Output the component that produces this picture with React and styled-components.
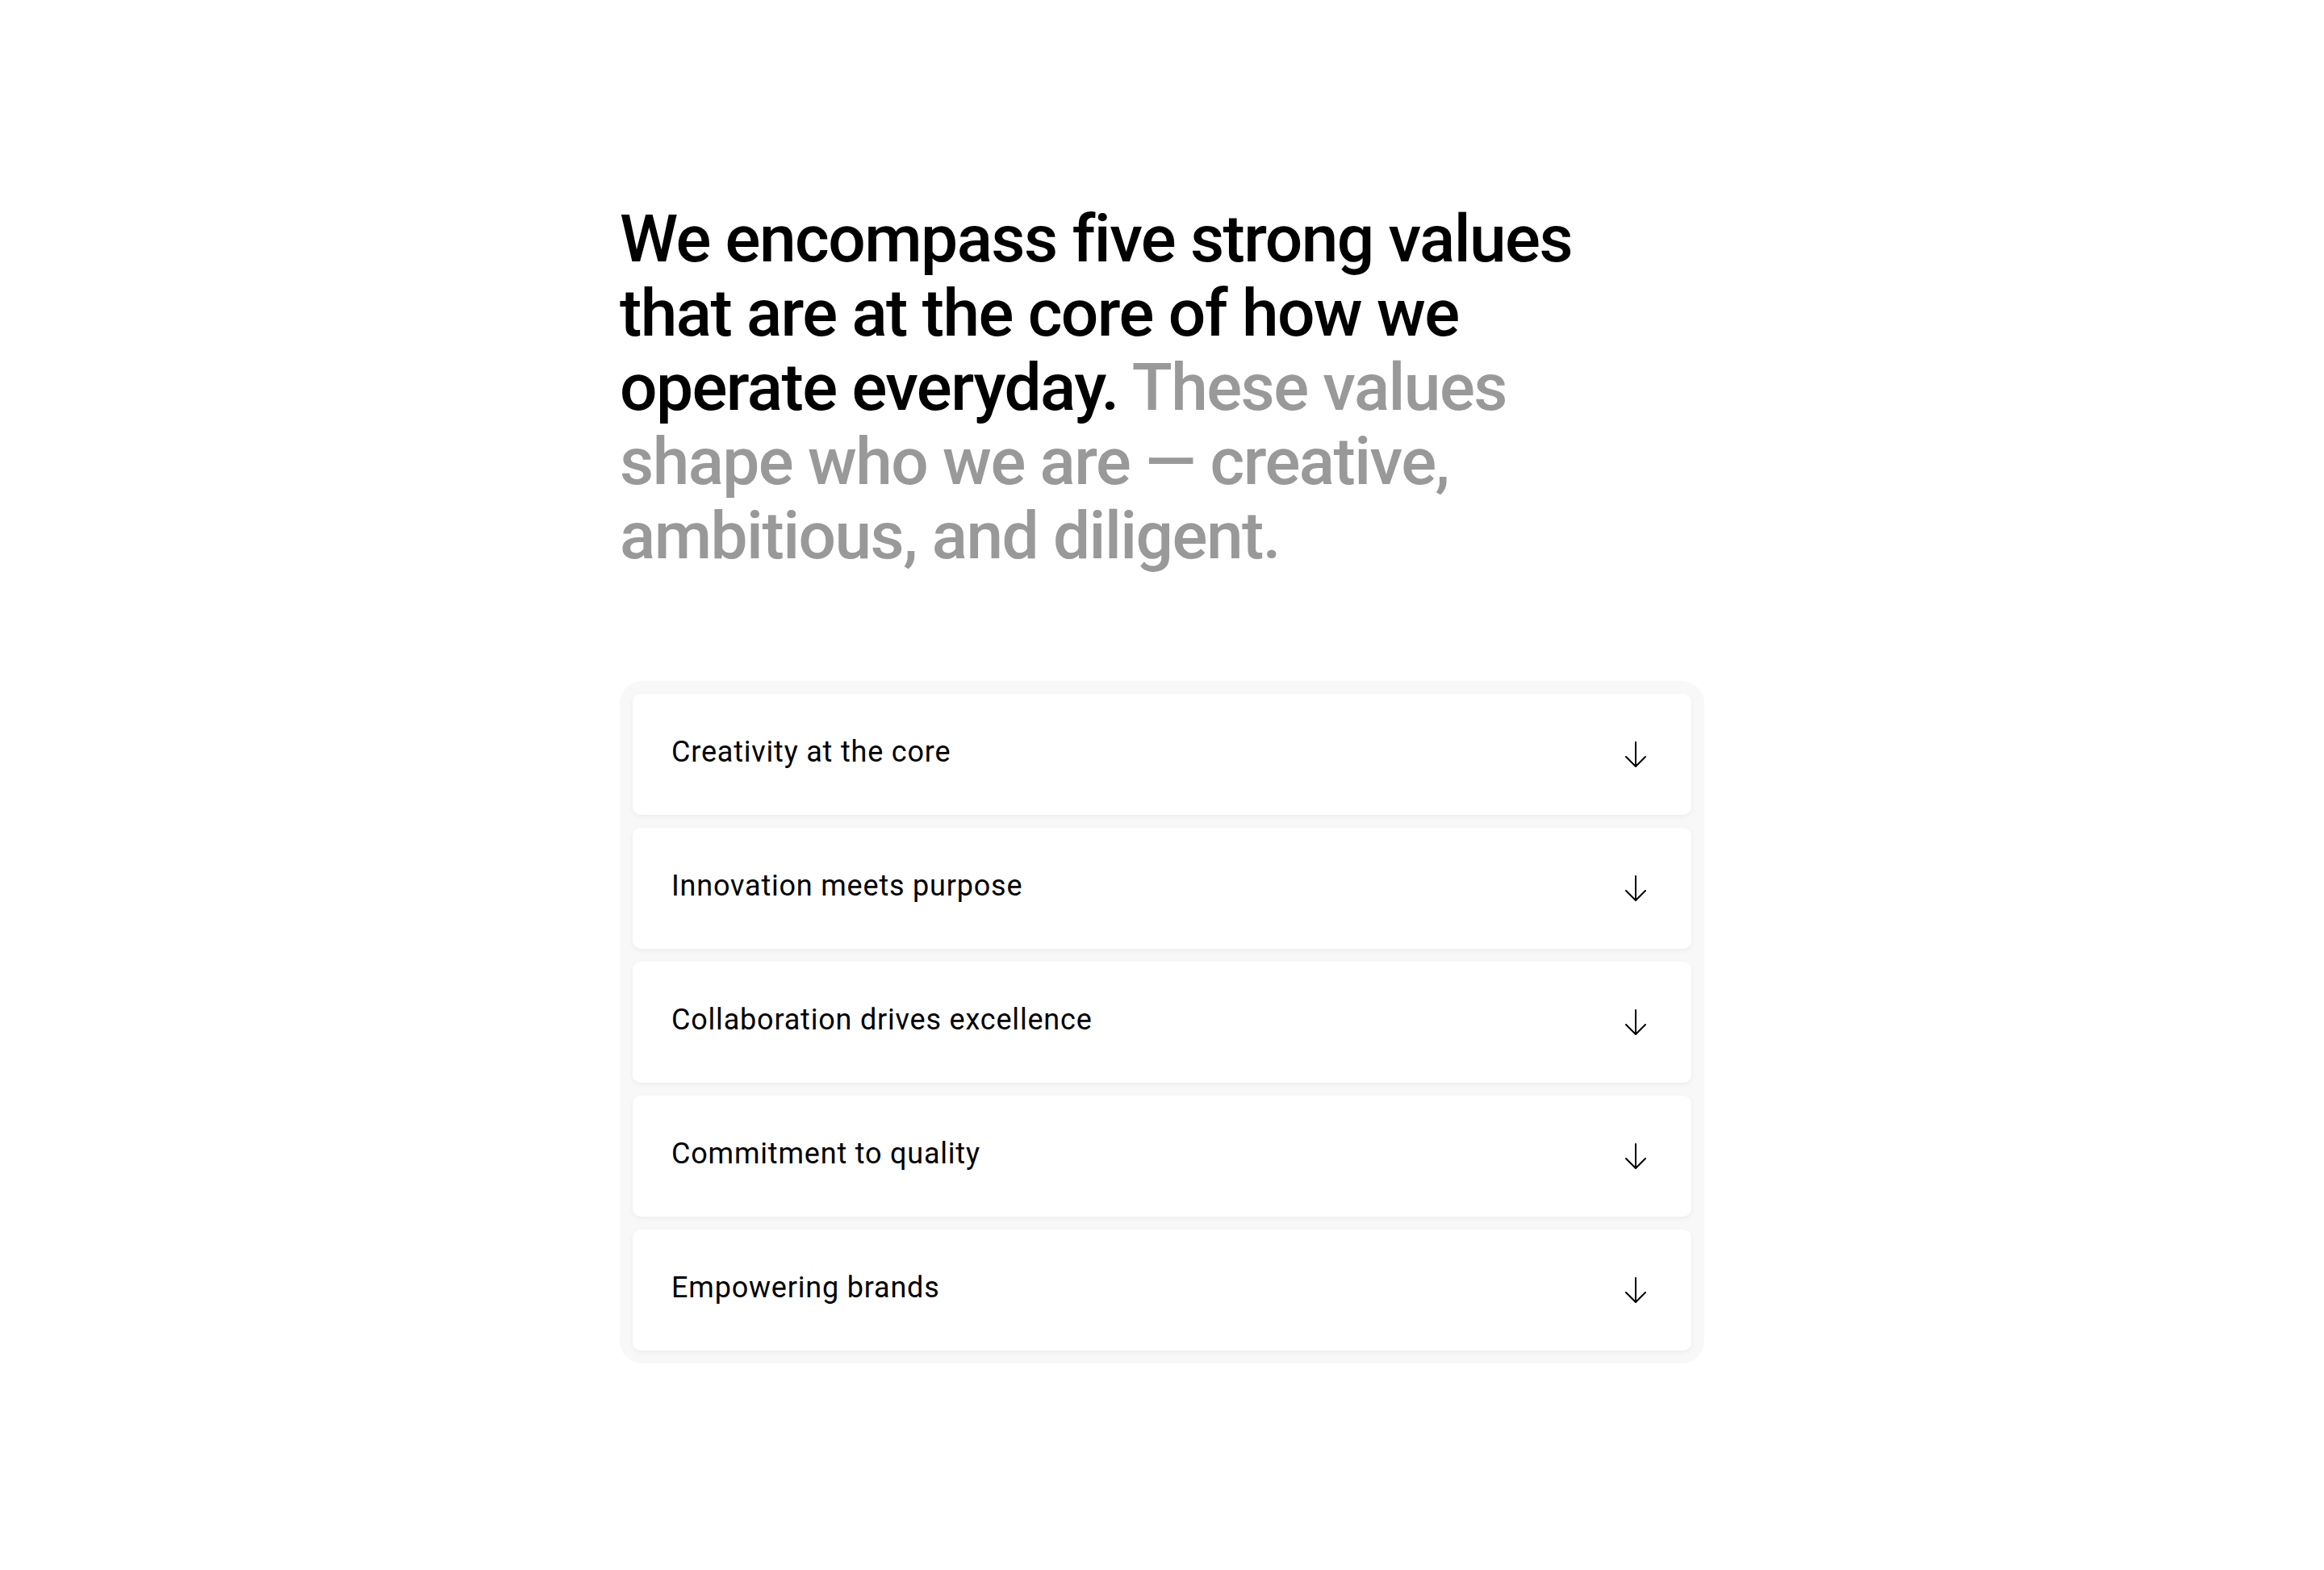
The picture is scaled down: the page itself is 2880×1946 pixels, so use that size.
import React from 'react';
import styled, { createGlobalStyle } from 'styled-components';

const GlobalStyle = createGlobalStyle`
  html, body {
    margin: 0;
    padding: 0;
    background: #ffffff;
  }
  body {
    font-family: Roboto, "Liberation Sans", sans-serif;
    color: #000;
    -webkit-font-smoothing: antialiased;
  }
`;

const values = [
  'Creativity at the core',
  'Innovation meets purpose',
  'Collaboration drives excellence',
  'Commitment to quality',
  'Empowering brands',
];

const Page = styled.main`
  min-height: 1946px;
  display: flex;
  justify-content: center;
  padding-top: 250px;
  box-sizing: border-box;
`;

const Section = styled.section`
  width: 1344px;
  display: flex;
  flex-direction: column;
  gap: 134px;
`;

const Heading = styled.h2`
  margin: 0;
  max-width: 1210px;
  font-family: Roboto, "Liberation Sans", sans-serif;
  font-size: 82px;
  line-height: 92px;
  font-weight: 500;
  letter-spacing: -0.019em;
  color: #000;
`;

const Muted = styled.span`
  color: #999999;
`;

const List = styled.div`
  display: flex;
  flex-direction: column;
  gap: 16px;
  padding: 16px;
  background: #f8f8f8;
  border-radius: 28px;
`;

const Item = styled.button`
  all: unset;
  box-sizing: border-box;
  height: 150px;
  display: flex;
  align-items: center;
  justify-content: space-between;
  padding: 0 56px 0 48px;
  background: #ffffff;
  border-radius: 10px;
  box-shadow: 0 2px 6px rgba(0, 0, 0, 0.05);
  cursor: pointer;
`;

const Title = styled.span`
  font-family: Roboto, "Liberation Sans", sans-serif;
  font-size: 36px;
  font-weight: 400;
  letter-spacing: 0.8px;
  color: #000;
  margin-top: -7px;
`;

const Arrow = () => (
  <svg width="26" height="32" viewBox="0 0 26 32" fill="none" stroke="#000" strokeWidth="2" strokeLinecap="round" strokeLinejoin="round">
    <path d="M13 1v30" />
    <path d="M1 19l12 12 12-12" />
  </svg>
);

export default function App() {
  return (
    <>
      <GlobalStyle />
      <Page>
        <Section>
          <Heading>
            We encompass five strong values that are at the core of how we operate everyday.{' '}
            <Muted>These values shape who we are — creative, ambitious, and diligent.</Muted>
          </Heading>
          <List>
            {values.map((v) => (
              <Item key={v}>
                <Title>{v}</Title>
                <Arrow />
              </Item>
            ))}
          </List>
        </Section>
      </Page>
    </>
  );
}
